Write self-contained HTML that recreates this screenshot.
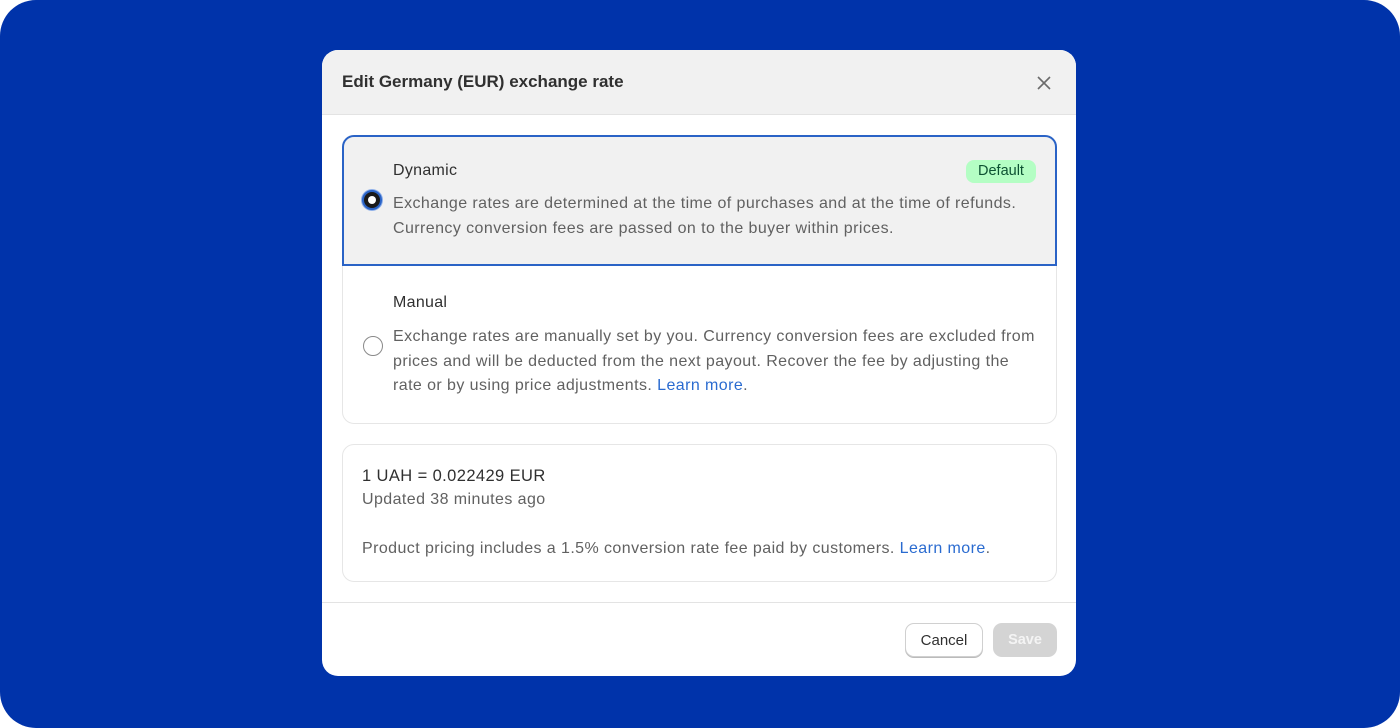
<!DOCTYPE html>
<html><head><meta charset="utf-8"><style>
*{box-sizing:border-box;margin:0;padding:0}
body{width:1400px;height:728px;background:#fff;font-family:"Liberation Sans",sans-serif;overflow:hidden}
.bg{position:absolute;left:0;top:0;width:1400px;height:728px;background:#0033aa;border-radius:36px}
.modal{position:absolute;left:322px;top:50px;width:754px;height:626px;background:#fff;border-radius:16px;overflow:hidden}
.hdr{height:65px;background:#f1f1f1;border-bottom:1px solid #e3e3e3;position:relative}
.hdr h1{position:absolute;left:20px;top:22px;font-size:17px;font-weight:bold;color:#303030}
.x{position:absolute;left:714px;top:25px}
.card{position:absolute;left:20px;width:715px;border:1px solid #e6e6e6;border-radius:12px}
.t{font-size:16px;color:#303030;letter-spacing:0.3px}
.d{font-size:16px;color:#616161;line-height:24.5px;letter-spacing:0.42px;white-space:nowrap}
a{color:#2a6bd0;text-decoration:none}
.radio{position:absolute;width:20px;height:20px;border-radius:50%}
.foot{position:absolute;left:0;top:552px;width:754px;border-top:1px solid #e3e3e3}
.btn{position:absolute;top:573px;height:34px;border-radius:9px;font-size:14.5px;font-weight:bold;text-align:center;line-height:34px}
</style></head><body>
<div class="bg"></div>
<div class="modal">
<div class="hdr"><h1>Edit Germany (EUR) exchange rate</h1>
<svg class="x" width="16" height="16" viewBox="0 0 16 16"><path d="M2 2L14 14M14 2L2 14" stroke="#6b6b6b" stroke-width="1.6"/></svg></div>
<div class="card" style="top:85px;height:289px;border-color:#e6e6e6"></div>
<div class="card" style="top:85px;height:131px;background:#f1f1f1;border:2px solid #2a63c6;border-radius:12px 12px 0 0"></div>
<div class="radio" style="left:40px;top:140px;background:#1a1a1a;border:2px solid #2a63c6;box-shadow:0 0 0 1px #8fb0ea"><div style="position:absolute;left:4px;top:4px;width:8px;height:8px;border-radius:50%;background:#fff"></div></div>
<div class="t" style="position:absolute;left:71px;top:112px">Dynamic</div>
<div style="position:absolute;left:644px;top:110px;width:70px;height:23px;background:#b4fec4;border-radius:8px;font-size:14.5px;color:#0c5132;text-align:center;line-height:23px">Default</div>
<div class="d" style="position:absolute;left:71px;top:142px">Exchange rates are determined at the time of purchases and at the time of refunds.<br>Currency conversion fees are passed on to the buyer within prices.</div>
<div class="radio" style="left:41px;top:286px;border:1.5px solid #8a8a8a"></div>
<div class="t" style="position:absolute;left:71px;top:244px">Manual</div>
<div class="d" style="position:absolute;left:71px;top:275px">Exchange rates are manually set by you. Currency conversion fees are excluded from<br>prices and will be deducted from the next payout. Recover the fee by adjusting the<br>rate or by using price adjustments. <a>Learn more</a>.</div>
<div class="card" style="top:394px;height:138px"></div>
<div style="position:absolute;left:40px;top:417px;font-size:16.5px;color:#303030;letter-spacing:0.4px">1 UAH = 0.022429 EUR</div>
<div class="d" style="position:absolute;left:40px;top:438px">Updated 38 minutes ago</div>
<div class="d" style="position:absolute;left:40px;top:487px">Product pricing includes a 1.5% conversion rate fee paid by customers. <a>Learn more</a>.</div>
<div class="foot"></div>
<div class="btn" style="left:583px;width:78px;border:1px solid #d0d0d0;box-shadow:0 1px 0 #bbb;color:#303030;background:#fff;font-weight:normal;font-size:15px">Cancel</div>
<div class="btn" style="left:671px;width:64px;background:#d4d4d4;color:#f4f4f4">Save</div>
</div>
</body></html>
